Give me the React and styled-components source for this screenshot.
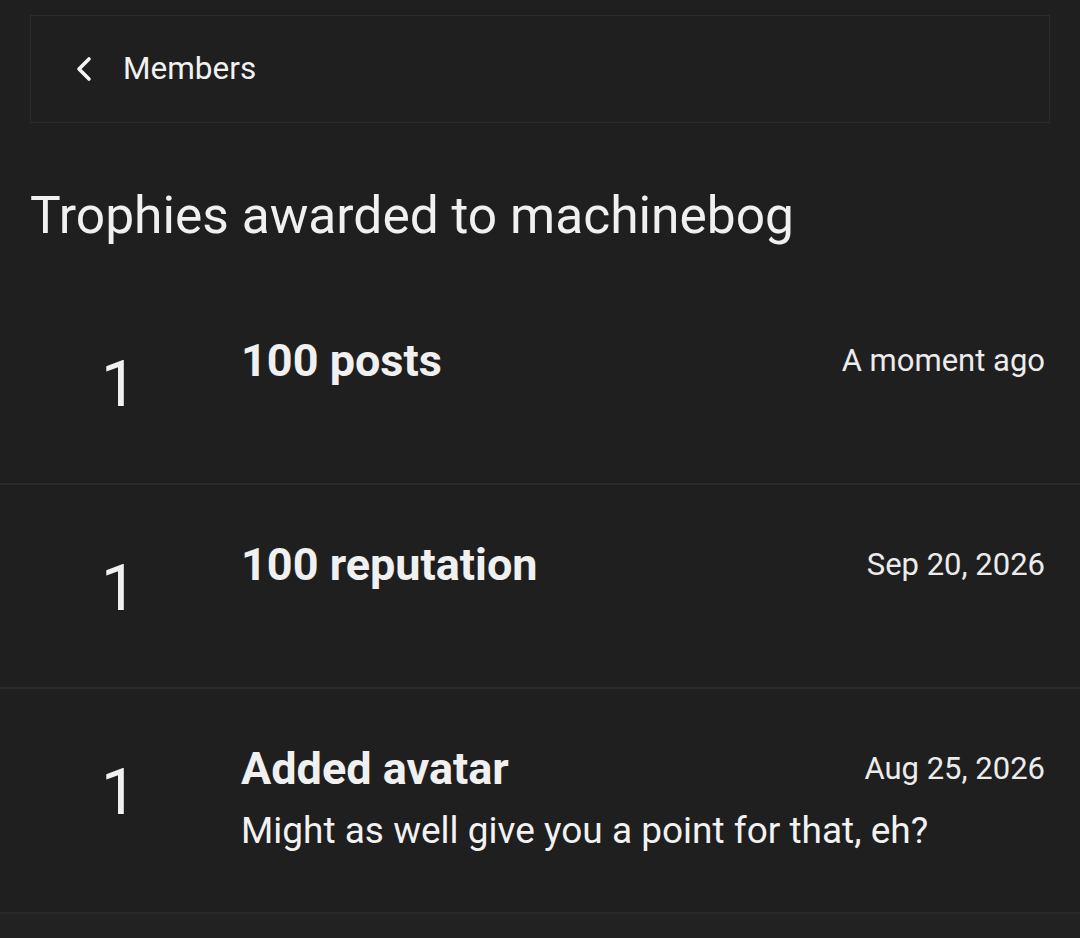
import styled, { createGlobalStyle } from "styled-components";

const GlobalStyle = createGlobalStyle`
  html, body {
    margin: 0;
    padding: 0;
    background: #1f1f1f;
  }
  body {
    font-family: Roboto, "Liberation Sans", sans-serif;
    color: #f1f1f1;
  }
`;

const Page = styled.div`
  min-height: 938px;
  display: flex;
  flex-direction: column;
`;

const Top = styled.div`
  padding: 15px 30px 0;
`;

const BackBar = styled.div`
  height: 106px;
  border: 1px solid #2c2c2c;
  display: flex;
  align-items: center;
  gap: 30px;
  padding-left: 44px;
`;

const BackLabel = styled.span`
  font-size: 31.5px;
  line-height: 40px;
  color: #f1f1f1;
`;

const Heading = styled.h1`
  margin: 61px 0 33px;
  font-size: 51.5px;
  line-height: 64px;
  font-weight: 400;
  color: #f0f0f0;
`;

const List = styled.div`
  display: flex;
  flex-direction: column;
`;

const Row = styled.div`
  display: grid;
  grid-template-columns: 178px 1fr auto;
  grid-template-areas:
    "count name date"
    "count note note";
  column-gap: 33px;
  align-items: start;
  padding: 52px 35px 59px 30px;
  border-bottom: 2px solid #2a2a2a;
`;

const Count = styled.div`
  grid-area: count;
  margin-top: 13px;
  text-align: center;
  font-size: 64px;
  line-height: 78px;
  font-weight: 400;
  color: #f0f0f0;
`;

const Name = styled.div`
  grid-area: name;
  font-size: 45px;
  line-height: 56px;
  font-weight: 700;
  color: #f0f0f0;
`;

const Note = styled.div`
  grid-area: note;
  margin-top: 12px;
  font-size: 37px;
  line-height: 44px;
  color: #f2f2f2;
`;

const When = styled.div`
  grid-area: date;
  margin-top: 8px;
  font-size: 31px;
  line-height: 40px;
  color: #ececec;
  white-space: nowrap;
`;

const Footer = styled.div`
  flex: 1;
  background: #222222;
`;

const Chevron = () => (
  <svg width="18" height="26" viewBox="0 0 18 26">
    <polyline
      points="14,3 4,13 14,23"
      fill="none"
      stroke="#f5f5f5"
      strokeWidth="3.6"
      strokeLinecap="round"
      strokeLinejoin="round"
    />
  </svg>
);

const trophies = [
  { count: 1, name: "100 posts", date: "A moment ago" },
  { count: 1, name: "100 reputation", date: "Sep 20, 2026" },
  {
    count: 1,
    name: "Added avatar",
    date: "Aug 25, 2026",
    note: "Might as well give you a point for that, eh?",
  },
];

export default function App() {
  return (
    <Page>
      <GlobalStyle />
      <Top>
        <BackBar>
          <Chevron />
          <BackLabel>Members</BackLabel>
        </BackBar>
        <Heading>Trophies awarded to machinebog</Heading>
      </Top>
      <List>
        {trophies.map((t) => (
          <Row key={t.name}>
            <Count>{t.count}</Count>
            <Name>{t.name}</Name>
            <When>{t.date}</When>
            {t.note && <Note>{t.note}</Note>}
          </Row>
        ))}
      </List>
      <Footer />
    </Page>
  );
}
